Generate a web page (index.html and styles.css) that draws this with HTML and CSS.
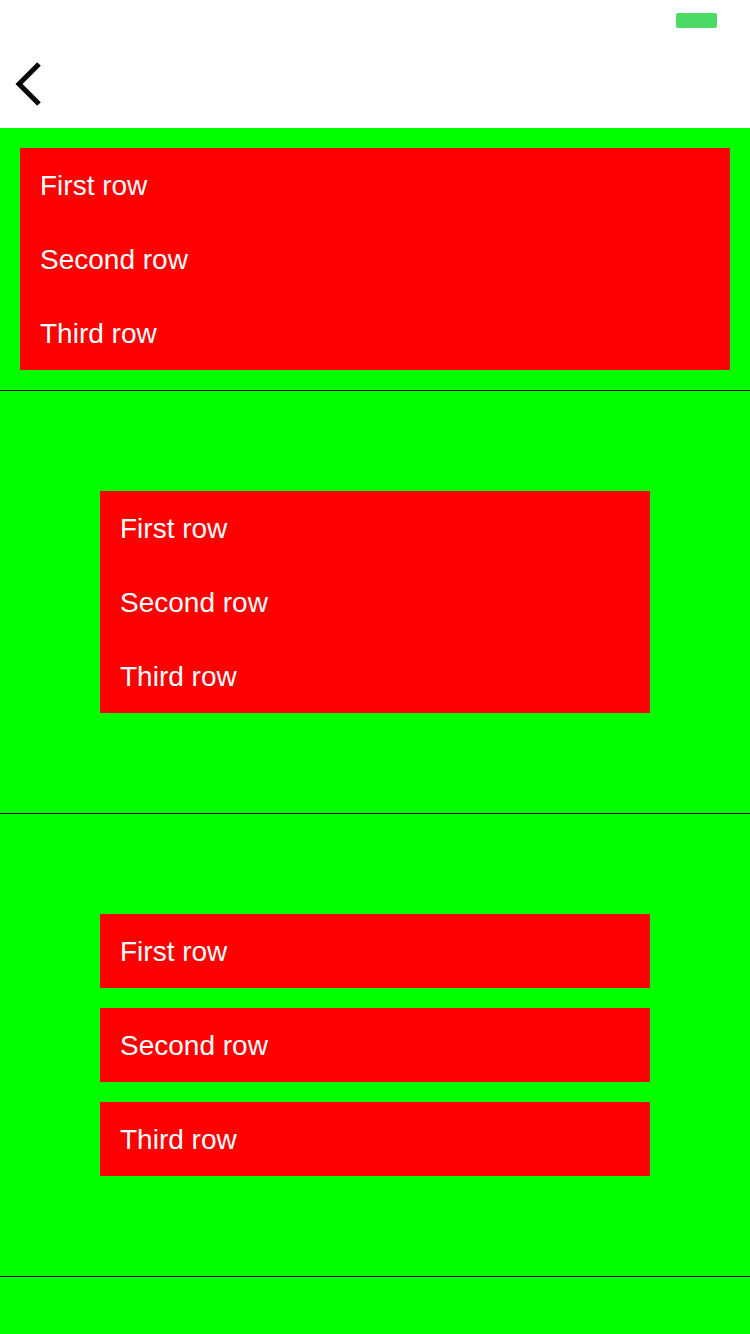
FILE: index.html
```html
<!DOCTYPE html>
<html>
<head>
<meta charset="utf-8">
<link rel="stylesheet" href="styles.css">
</head>
<body>
<header class="header">
  <div class="status">
    <div class="battery"></div>
  </div>
  <nav class="nav">
    <svg class="back" width="30" height="48" viewBox="0 0 30 48">
      <polyline points="24,4 4,24 24,44" fill="none" stroke="#000" stroke-width="5"/>
    </svg>
  </nav>
</header>
<main class="content">
  <section class="section s1">
    <div class="list">
      <div class="row">First row</div>
      <div class="row">Second row</div>
      <div class="row">Third row</div>
    </div>
  </section>
  <section class="section s2">
    <div class="list">
      <div class="row">First row</div>
      <div class="row">Second row</div>
      <div class="row">Third row</div>
    </div>
  </section>
  <section class="section s3">
    <div class="row">First row</div>
    <div class="row">Second row</div>
    <div class="row">Third row</div>
  </section>
</main>
</body>
</html>
```
FILE: styles.css
```css
html, body {
  margin: 0;
  padding: 0;
}
body {
  width: 750px;
  height: 1334px;
  overflow: hidden;
  background: #00ff00;
  font-family: "Liberation Sans", Arial, sans-serif;
}
.header {
  background: #fff;
  height: 128px;
  display: flex;
  flex-direction: column;
}
.status {
  height: 40px;
  display: flex;
  justify-content: flex-end;
  align-items: flex-start;
  padding-right: 33px;
}
.battery {
  margin-top: 13px;
  width: 41px;
  height: 15px;
  background: #4cd964;
  border-radius: 2px;
}
.nav {
  height: 88px;
  display: flex;
  align-items: center;
  padding-left: 15px;
}
.back {
  display: block;
}
.content {
  background: #00ff00;
}
.section {
  border-bottom: 1px solid #000;
}
.s1 {
  padding: 20px;
}
.s2 {
  padding: 100px;
}
.s3 {
  padding: 100px;
  display: flex;
  flex-direction: column;
  gap: 20px;
}
.list {
  background: #ff0000;
}
.row {
  background: #ff0000;
  height: 74px;
  box-sizing: border-box;
  padding-top: 2px;
  display: flex;
  align-items: center;
  padding-left: 20px;
  color: #fff;
  font-size: 28px;
}
```
